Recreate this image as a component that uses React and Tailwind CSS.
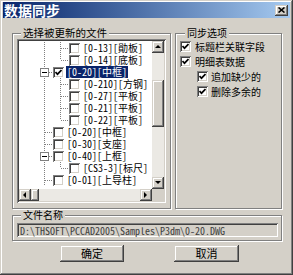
import React from "react";

const raised =
  "shadow-[inset_-1px_-1px_#404040,inset_1px_1px_#d4d0c8,inset_-2px_-2px_#808080,inset_2px_2px_#ffffff]";
const sunken =
  "shadow-[inset_1px_1px_#808080,inset_-1px_-1px_#ffffff,inset_2px_2px_#404040,inset_-2px_-2px_#d4d0c8]";

const rows = [
  { c1: "pipe", c2: "tee", label: "[0-13][勛板]" },
  { c1: "pipe", c2: "end", label: "[0-14][底板]" },
  { c1: "box", label: "[0-20][中框]", checked: true, selected: true },
  { c1: "pipe", c2: "tee", label: "[0-210][方钢]" },
  { c1: "pipe", c2: "tee", label: "[0-27][平板]" },
  { c1: "pipe", c2: "tee", label: "[0-21][平板]" },
  { c1: "pipe", c2: "end", label: "[0-22][平板]" },
  { c1: "tee", label: "[0-20][中框]" },
  { c1: "tee", label: "[0-30][支座]" },
  { c1: "box", label: "[0-40][上框]" },
  { c1: "pipe", c2: "end", label: "[CS3-3][标尺]" },
  { c1: "tee", label: "[0-01][上导柱]" },
];

function Cell({ type }) {
  const dot = { stroke: "#808080", strokeWidth: 1, strokeDasharray: "1 1" };
  return (
    <svg width="16" height="12" className="shrink-0">
      {type !== "end" && <line x1="8.5" y1="0" x2="8.5" y2="12" {...dot} />}
      {type === "end" && <line x1="8.5" y1="0" x2="8.5" y2="6" {...dot} />}
      {type !== "pipe" && <line x1="9" y1="6.5" x2="16" y2="6.5" {...dot} />}
      {type === "box" && (
        <>
          <rect x="4.5" y="2.5" width="8" height="8" fill="#fff" stroke="#808080" />
          <line x1="6" y1="6.5" x2="11" y2="6.5" stroke="#000" />
        </>
      )}
    </svg>
  );
}

function Check({ checked }) {
  return (
    <div className={`w-[11px] h-[11px] shrink-0 bg-white ${sunken} flex items-center justify-center`}>
      {checked && (
        <svg width="7" height="7" viewBox="0 0 7 7">
          <path d="M0.5 3 L2.5 5.2 L6.5 1" fill="none" stroke="#000" strokeWidth="1.7" />
        </svg>
      )}
    </div>
  );
}

function Arrow({ dir }) {
  const pts = {
    up: "1,5 4,2 7,5",
    down: "1,2 4,5 7,2",
    left: "5,1 2,4 5,7",
    right: "2,1 5,4 2,7",
  };
  return (
    <div className={`w-[12px] h-[12px] shrink-0 bg-[#d4d0c8] ${raised} flex items-center justify-center`}>
      <svg width="8" height="8">
        <polygon points={pts[dir]} fill="#000" />
      </svg>
    </div>
  );
}

function Legend({ children, className = "" }) {
  return (
    <legend className={`px-[2px] bg-[#d4d0c8] text-[10.5px] leading-[12px] ${className}`}>{children}</legend>
  );
}

const groupCls =
  "border border-[#808080] shadow-[1px_1px_0_#ffffff,inset_1px_1px_0_#ffffff]";

export default function App() {
  return (
    <div
      className={`w-[293px] h-[275px] bg-[#d4d0c8] px-[3px] pt-[2px] overflow-hidden text-black font-['Noto_Sans_CJK_SC',sans-serif] shadow-[inset_-1px_-1px_#404040,inset_1px_1px_#d4d0c8,inset_-2px_-2px_#808080,inset_2px_2px_#ffffff]`}
    >
      {/* title bar */}
      <div className="h-[16px] flex items-center justify-between bg-linear-to-r from-[#0a246a] to-[#a6caf0] pl-[1px] pr-[2px]">
        <span className="text-white font-bold text-[14px] leading-[16px]">数据同步</span>
        <div className={`w-[13px] h-[11px] bg-[#d4d0c8] ${raised} flex items-center justify-center`}>
          <svg width="7" height="6">
            <path d="M0.5 0.5 L6.5 5.5 M6.5 0.5 L0.5 5.5" stroke="#000" strokeWidth="1.6" />
          </svg>
        </div>
      </div>

      <div className="pl-[9px] pt-[9px]">
        <div className="flex">
          {/* left group */}
          <fieldset className={`w-[159px] h-[182px] pl-[4px] ${groupCls}`}>
            <Legend className="ml-[4px]">选择被更新的文件</Legend>
            <div className={`w-[149px] h-[164px] p-[2px] bg-white ${sunken}`}>
              <div className="grid grid-cols-[133px_12px] grid-rows-[148px_12px] w-[145px] h-[160px]">
                <div className="bg-white overflow-hidden pt-[1px] pl-[17px] font-['Noto_Sans_Mono_CJK_SC','Liberation_Mono','Noto_Sans_CJK_SC',monospace] text-[10px] leading-[12px]">
                  {rows.map((r, i) => (
                    <div key={i} className="flex items-center h-[12px] whitespace-nowrap">
                      <Cell type={r.c1} />
                      {r.c2 && <Cell type={r.c2} />}
                      <div className="ml-[1px]">
                        <Check checked={r.checked} />
                      </div>
                      <span
                        className={`ml-[2px] px-[1px] h-[12px] leading-[12px] ${
                          r.selected ? "bg-[#0a246a] text-white" : ""
                        }`}
                      >
                        {r.label}
                      </span>
                    </div>
                  ))}
                </div>
                {/* vertical scrollbar */}
                <div className="flex flex-col bg-[#ebe9e4]">
                  <Arrow dir="up" />
                  <div className="h-[27px]" />
                  <div className={`h-[47px] bg-[#d4d0c8] ${raised}`} />
                  <div className="flex-1" />
                  <Arrow dir="down" />
                </div>
                {/* horizontal scrollbar */}
                <div className="flex bg-[#ebe9e4]">
                  <Arrow dir="left" />
                  <div className={`w-[8px] bg-[#d4d0c8] ${raised}`} />
                  <div className="flex-1" />
                  <Arrow dir="right" />
                </div>
                <div className="bg-[#d4d0c8]" />
              </div>
            </div>
          </fieldset>

          {/* right group */}
          <fieldset className={`ml-[4px] w-[107px] h-[182px] pl-[4px] ${groupCls}`}>
            <Legend className="ml-[5px] text-[10px]">同步选项</Legend>
            <div className="text-[10px] leading-[12px]">
              <div className="h-[15px] flex items-center gap-[4px]">
                <Check checked />
                <span>标题栏关联字段</span>
              </div>
              <div className="h-[15px] flex items-center gap-[4px]">
                <Check checked />
                <span>明细表数据</span>
              </div>
              <div className="h-[15px] flex items-center gap-[3px] ml-[17px]">
                <Check checked />
                <span>追加缺少的</span>
              </div>
              <div className="h-[15px] flex items-center gap-[3px] ml-[17px]">
                <Check checked />
                <span>删除多余的</span>
              </div>
            </div>
          </fieldset>
        </div>

        {/* file name group */}
        <fieldset className={`w-[270px] h-[32px] pl-[4px] ${groupCls}`}>
          <Legend className="ml-[4px] text-[10px]">文件名称</Legend>
          <div
            className={`mt-[2px] w-[261px] h-[14px] px-[3px] bg-[#d4d0c8] ${sunken} flex items-center font-['Noto_Sans_Mono_CJK_SC','Liberation_Mono',monospace] text-[10px] text-[#404040] whitespace-nowrap overflow-hidden`}
          >
            D:\THSOFT\PCCAD2005\Samples\P3dm\0-20.DWG
          </div>
        </fieldset>

        {/* buttons */}
        <div className="flex mt-[4px] ml-[48px] gap-[50px]">
          <button className={`w-[64px] h-[17px] bg-[#d4d0c8] ${raised} text-[11px] leading-[17px]`}>确定</button>
          <button className={`w-[65px] h-[17px] bg-[#d4d0c8] ${raised} text-[11px] leading-[17px]`}>取消</button>
        </div>
      </div>
    </div>
  );
}
